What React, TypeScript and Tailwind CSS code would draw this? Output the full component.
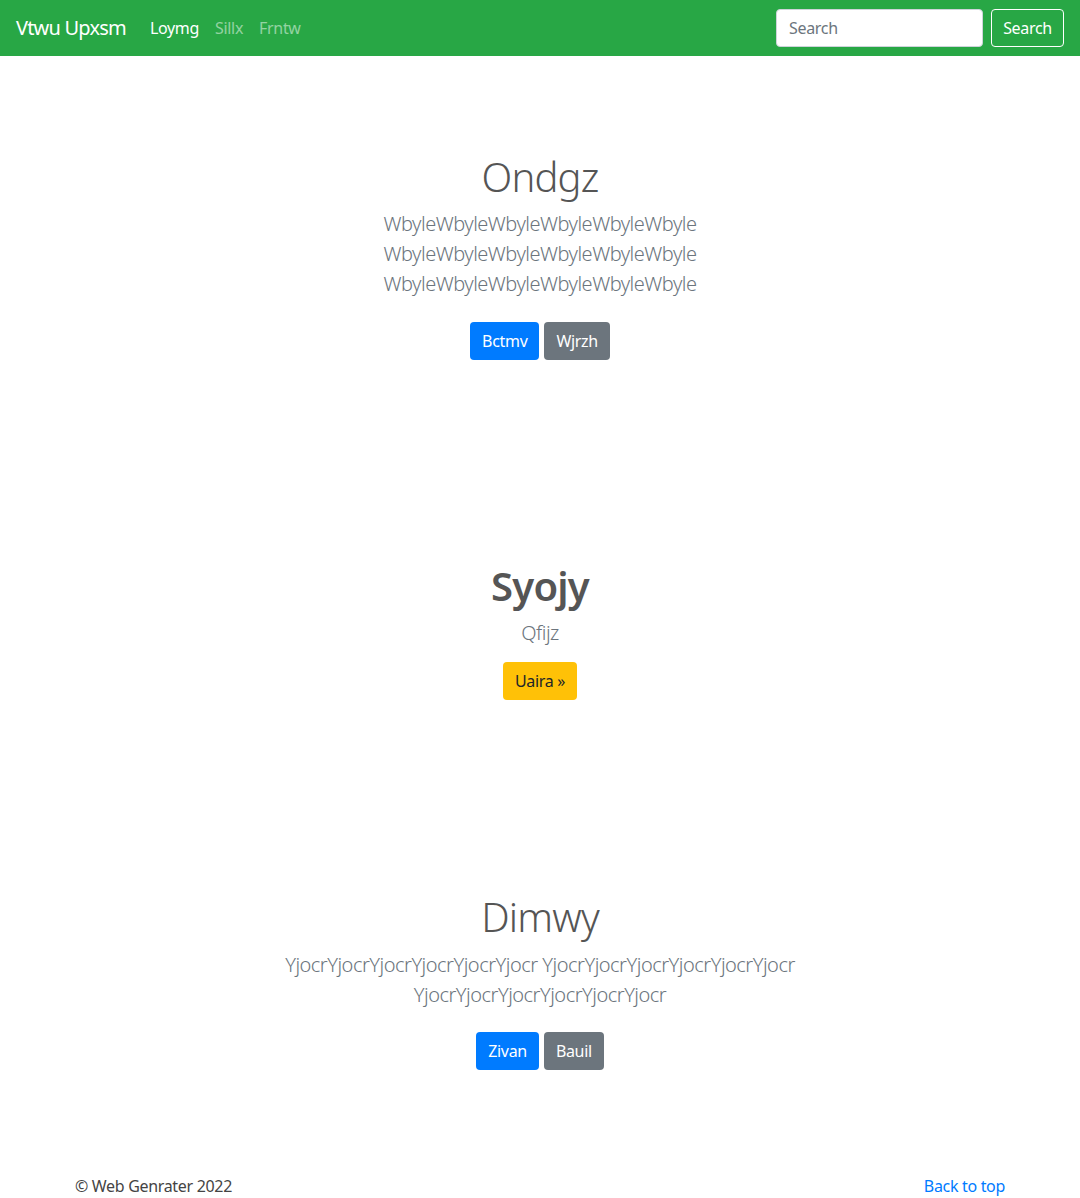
import React from 'react';

const font = { fontFamily: '"Noto Sans", "Open Sans", sans-serif' };

type Kind = 'blue' | 'gray' | 'yellow';

function Btn({ label, kind }: { label: string; kind: Kind }) {
  const cls =
    kind === 'blue'
      ? 'bg-[#007bff] text-white'
      : kind === 'gray'
      ? 'bg-[#6c757d] text-white'
      : 'bg-[#ffc107] text-[#212529]';
  return (
    <button className={`inline-flex items-center h-[38px] px-3 text-base leading-6 rounded ${cls}`}>{label}</button>
  );
}

function Navbar() {
  return (
    <nav className="h-14 bg-[#28a745] flex items-center px-4">
      <span className="text-white text-xl mr-4 leading-[30px] tracking-[-0.04em]">Vtwu Upxsm</span>
      <div className="flex items-center">
        <a className="px-2 text-white">Loymg</a>
        <a className="px-2 text-white/50">Sillx</a>
        <a className="px-2 text-white/50">Frntw</a>
      </div>
      <div className="ml-auto flex items-center gap-2">
        <input
          placeholder="Search"
          className="w-[207px] h-[38px] px-3 bg-white rounded border border-[#ced4da] text-base placeholder:text-[#6c757d] outline-none"
        />
        <button className="w-[73px] h-[38px] flex items-center justify-center rounded border border-white text-white text-base">Search</button>
      </div>
    </nav>
  );
}

interface HeroProps {
  title: string;
  bold?: boolean;
  lines: string[];
  buttons: { label: string; kind: Kind }[];
  pad: string;
  titleGap: string;
  btnGap: string;
}

function Hero({ title, bold, lines, buttons, pad, titleGap, btnGap }: HeroProps) {
  return (
    <section className={`text-center ${pad}`}>
      <div className="w-[610px] mx-auto">
        <h1 className={`text-[40px] leading-[48px] text-[#555] tracking-[-0.02em] ${titleGap} ${bold ? 'font-semibold' : 'font-light'}`}>{title}</h1>
        <p className={`text-xl leading-[30px] font-light text-[#6c757d] tracking-[-0.025em] ${btnGap}`}>
          {lines.map((l, i) => (
            <span key={i} className="block">{l}</span>
          ))}
        </p>
        <div className="flex justify-center gap-[5px]">
          {buttons.map((b) => (
            <Btn key={b.label} label={b.label} kind={b.kind} />
          ))}
        </div>
      </div>
    </section>
  );
}

export default function App() {
  const w = 'WbyleWbyleWbyleWbyleWbyleWbyle';
  const y = 'YjocrYjocrYjocrYjocrYjocrYjocr';
  return (
    <div style={font} className="bg-white text-[#212529] min-h-[1198px] tracking-[-0.02em]">
      <Navbar />
      <Hero
        title="Ondgz"
        lines={[w, w, w]}
        buttons={[{ label: 'Bctmv', kind: 'blue' }, { label: 'Wjrzh', kind: 'gray' }]}
        pad="pt-[97px] pb-[101px]"
        titleGap="mb-2"
        btnGap="mb-[23px]"
      />
      <Hero
        title="Syojy"
        bold
        lines={['Qfijz']}
        buttons={[{ label: 'Uaira »', kind: 'yellow' }]}
        pad="pt-[101px] pb-[96px]"
        titleGap="mb-2"
        btnGap="mb-[14px]"
      />
      <Hero
        title="Dimwy"
        lines={[`${y} ${y}`, y]}
        buttons={[{ label: 'Zivan', kind: 'blue' }, { label: 'Bauil', kind: 'gray' }]}
        pad="pt-[97px] pb-[104px]"
        titleGap="mb-[9px]"
        btnGap="mb-[22px]"
      />
      <footer className="w-[930px] mx-auto flex justify-between text-base leading-6">
        <p className="text-[#444]">© Web Genrater 2022</p>
        <a className="text-[#007bff]">Back to top</a>
      </footer>
    </div>
  );
}
